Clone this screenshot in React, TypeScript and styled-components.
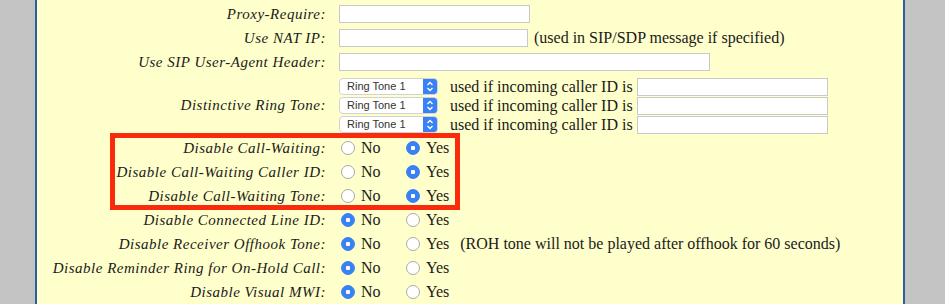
import styled, { createGlobalStyle } from "styled-components";

const GlobalStyle = createGlobalStyle`
  html, body {
    margin: 0;
    padding: 0;
    background: #c4c4c4;
    font-family: "Liberation Serif", "Times New Roman", serif;
    color: #1a1a1a;
    overflow: hidden;
  }
`;

type Choice = "no" | "yes";

const ringRows = [1, 2, 3];

const waitingRows: { label: string; value: Choice }[] = [
  { label: "Disable Call-Waiting:", value: "yes" },
  { label: "Disable Call-Waiting Caller ID:", value: "yes" },
  { label: "Disable Call-Waiting Tone:", value: "yes" },
];

const otherRows: { label: string; value: Choice; note?: string }[] = [
  { label: "Disable Connected Line ID:", value: "no" },
  {
    label: "Disable Receiver Offhook Tone:",
    value: "no",
    note: "(ROH tone will not be played after offhook for 60 seconds)",
  },
  { label: "Disable Reminder Ring for On-Hold Call:", value: "no" },
  { label: "Disable Visual MWI:", value: "no" },
];

const Chevrons = () => (
  <svg width="8" height="11" viewBox="0 0 8 11">
    <path d="M1.5 4 L4 1.5 L6.5 4" fill="none" stroke="#fff" strokeWidth="1.3" />
    <path d="M1.5 7 L4 9.5 L6.5 7" fill="none" stroke="#fff" strokeWidth="1.3" />
  </svg>
);

const RadioPair = ({ value, note }: { value: Choice; note?: string }) => (
  <RadioGroup>
    <Option $wide>
      <Radio $checked={value === "no"} />
      No
    </Option>
    <Option>
      <Radio $checked={value === "yes"} />
      Yes
    </Option>
    {note && <Note>{note}</Note>}
  </RadioGroup>
);

const App = () => {
  return (
    <>
      <GlobalStyle />
      <Page>
        <Panel>
          <Row>
            <Label>Proxy-Require:</Label>
            <Field>
              <TextInput $width={191} />
            </Field>
          </Row>
          <Row>
            <Label>Use NAT IP:</Label>
            <Field>
              <TextInput $width={189} />
              <Hint>(used in SIP/SDP message if specified)</Hint>
            </Field>
          </Row>
          <Row>
            <Label>Use SIP User-Agent Header:</Label>
            <Field>
              <TextInput $width={371} />
            </Field>
          </Row>
          <RingBlock>
            <Label>Distinctive Ring Tone:</Label>
            <RingList>
              {ringRows.map((n) => (
                <RingRow key={n}>
                  <SelectBox>
                    <SelectText>Ring Tone 1</SelectText>
                    <SelectButton>
                      <Chevrons />
                    </SelectButton>
                  </SelectBox>
                  <RingText>used if incoming caller ID is</RingText>
                  <TextInput $width={191} $height={18} />
                </RingRow>
              ))}
            </RingList>
          </RingBlock>
          <Highlight>
            {waitingRows.map((r) => (
              <Row key={r.label}>
                <Label>{r.label}</Label>
                <RadioPair value={r.value} />
              </Row>
            ))}
          </Highlight>
          {otherRows.map((r) => (
            <Row key={r.label}>
              <Label>{r.label}</Label>
              <RadioPair value={r.value} note={r.note} />
            </Row>
          ))}
        </Panel>
      </Page>
    </>
  );
};

const Page = styled.div`
  width: 945px;
  height: 304px;
  padding-left: 35px;
  box-sizing: border-box;
`;

const Panel = styled.div`
  width: 870px;
  height: 304px;
  box-sizing: border-box;
  background: #ffffcc;
  border-left: 2px solid #2c5d9c;
  border-right: 2px solid #2c5d9c;
  padding-top: 2px;
`;

const Row = styled.div`
  display: grid;
  grid-template-columns: 289px 1fr;
  column-gap: 13px;
  align-items: center;
  height: 24px;
`;

const Label = styled.div`
  text-align: right;
  font-style: italic;
  font-size: 15px;
  letter-spacing: 0.5px;
  white-space: nowrap;
`;

const Field = styled.div`
  display: flex;
  align-items: center;
  gap: 6px;
`;

const TextInput = styled.div<{ $width: number; $height?: number }>`
  width: ${(p) => p.$width}px;
  height: ${(p) => p.$height ?? 18}px;
  box-sizing: border-box;
  background: #fff;
  border: 1px solid #c9c9c9;
`;

const Hint = styled.span`
  font-size: 16px;
  white-space: nowrap;
`;

const RingBlock = styled.div`
  display: grid;
  grid-template-columns: 289px 1fr;
  column-gap: 13px;
  align-items: center;
  padding: 3px 0 2px;
`;

const RingList = styled.div`
  display: flex;
  flex-direction: column;
`;

const RingRow = styled.div`
  display: flex;
  align-items: center;
  height: 19px;
`;

const SelectBox = styled.div`
  width: 99px;
  height: 17px;
  box-sizing: border-box;
  display: flex;
  align-items: stretch;
  background: #fff;
  border: 1px solid #d2d2d2;
  border-radius: 4px;
  overflow: hidden;
`;

const SelectText = styled.span`
  flex: 1;
  padding-left: 7px;
  font-family: "Liberation Sans", Arial, sans-serif;
  font-size: 11px;
  line-height: 15px;
  color: #333;
`;

const SelectButton = styled.span`
  width: 14px;
  display: flex;
  align-items: center;
  justify-content: center;
  background: #3a80f6;
`;

const RingText = styled.span`
  margin-left: 12px;
  width: 187px;
  font-size: 16px;
  white-space: nowrap;
`;

const Highlight = styled.div`
  position: relative;
  &::before {
    content: "";
    position: absolute;
    left: 73px;
    top: -3px;
    width: 350px;
    height: 77px;
    box-sizing: border-box;
    border: 5px solid #fa2a0c;
    pointer-events: none;
  }
`;

const RadioGroup = styled.div`
  display: flex;
  align-items: center;
  font-size: 16px;
`;

const Option = styled.span<{ $wide?: boolean }>`
  display: inline-flex;
  align-items: center;
  gap: 6px;
  width: ${(p) => (p.$wide ? "65px" : "auto")};
`;

const Radio = styled.span<{ $checked: boolean }>`
  width: 14px;
  height: 14px;
  margin-left: 2px;
  box-sizing: border-box;
  border-radius: 50%;
  background: ${(p) =>
    p.$checked
      ? "radial-gradient(circle, #fff 0 2px, #3a80f6 2.5px)"
      : "#fff"};
  border: 1px solid ${(p) => (p.$checked ? "#3a80f6" : "#a9a9a9")};
`;

const Note = styled.span`
  margin-left: 11px;
  white-space: nowrap;
`;

export default App;
